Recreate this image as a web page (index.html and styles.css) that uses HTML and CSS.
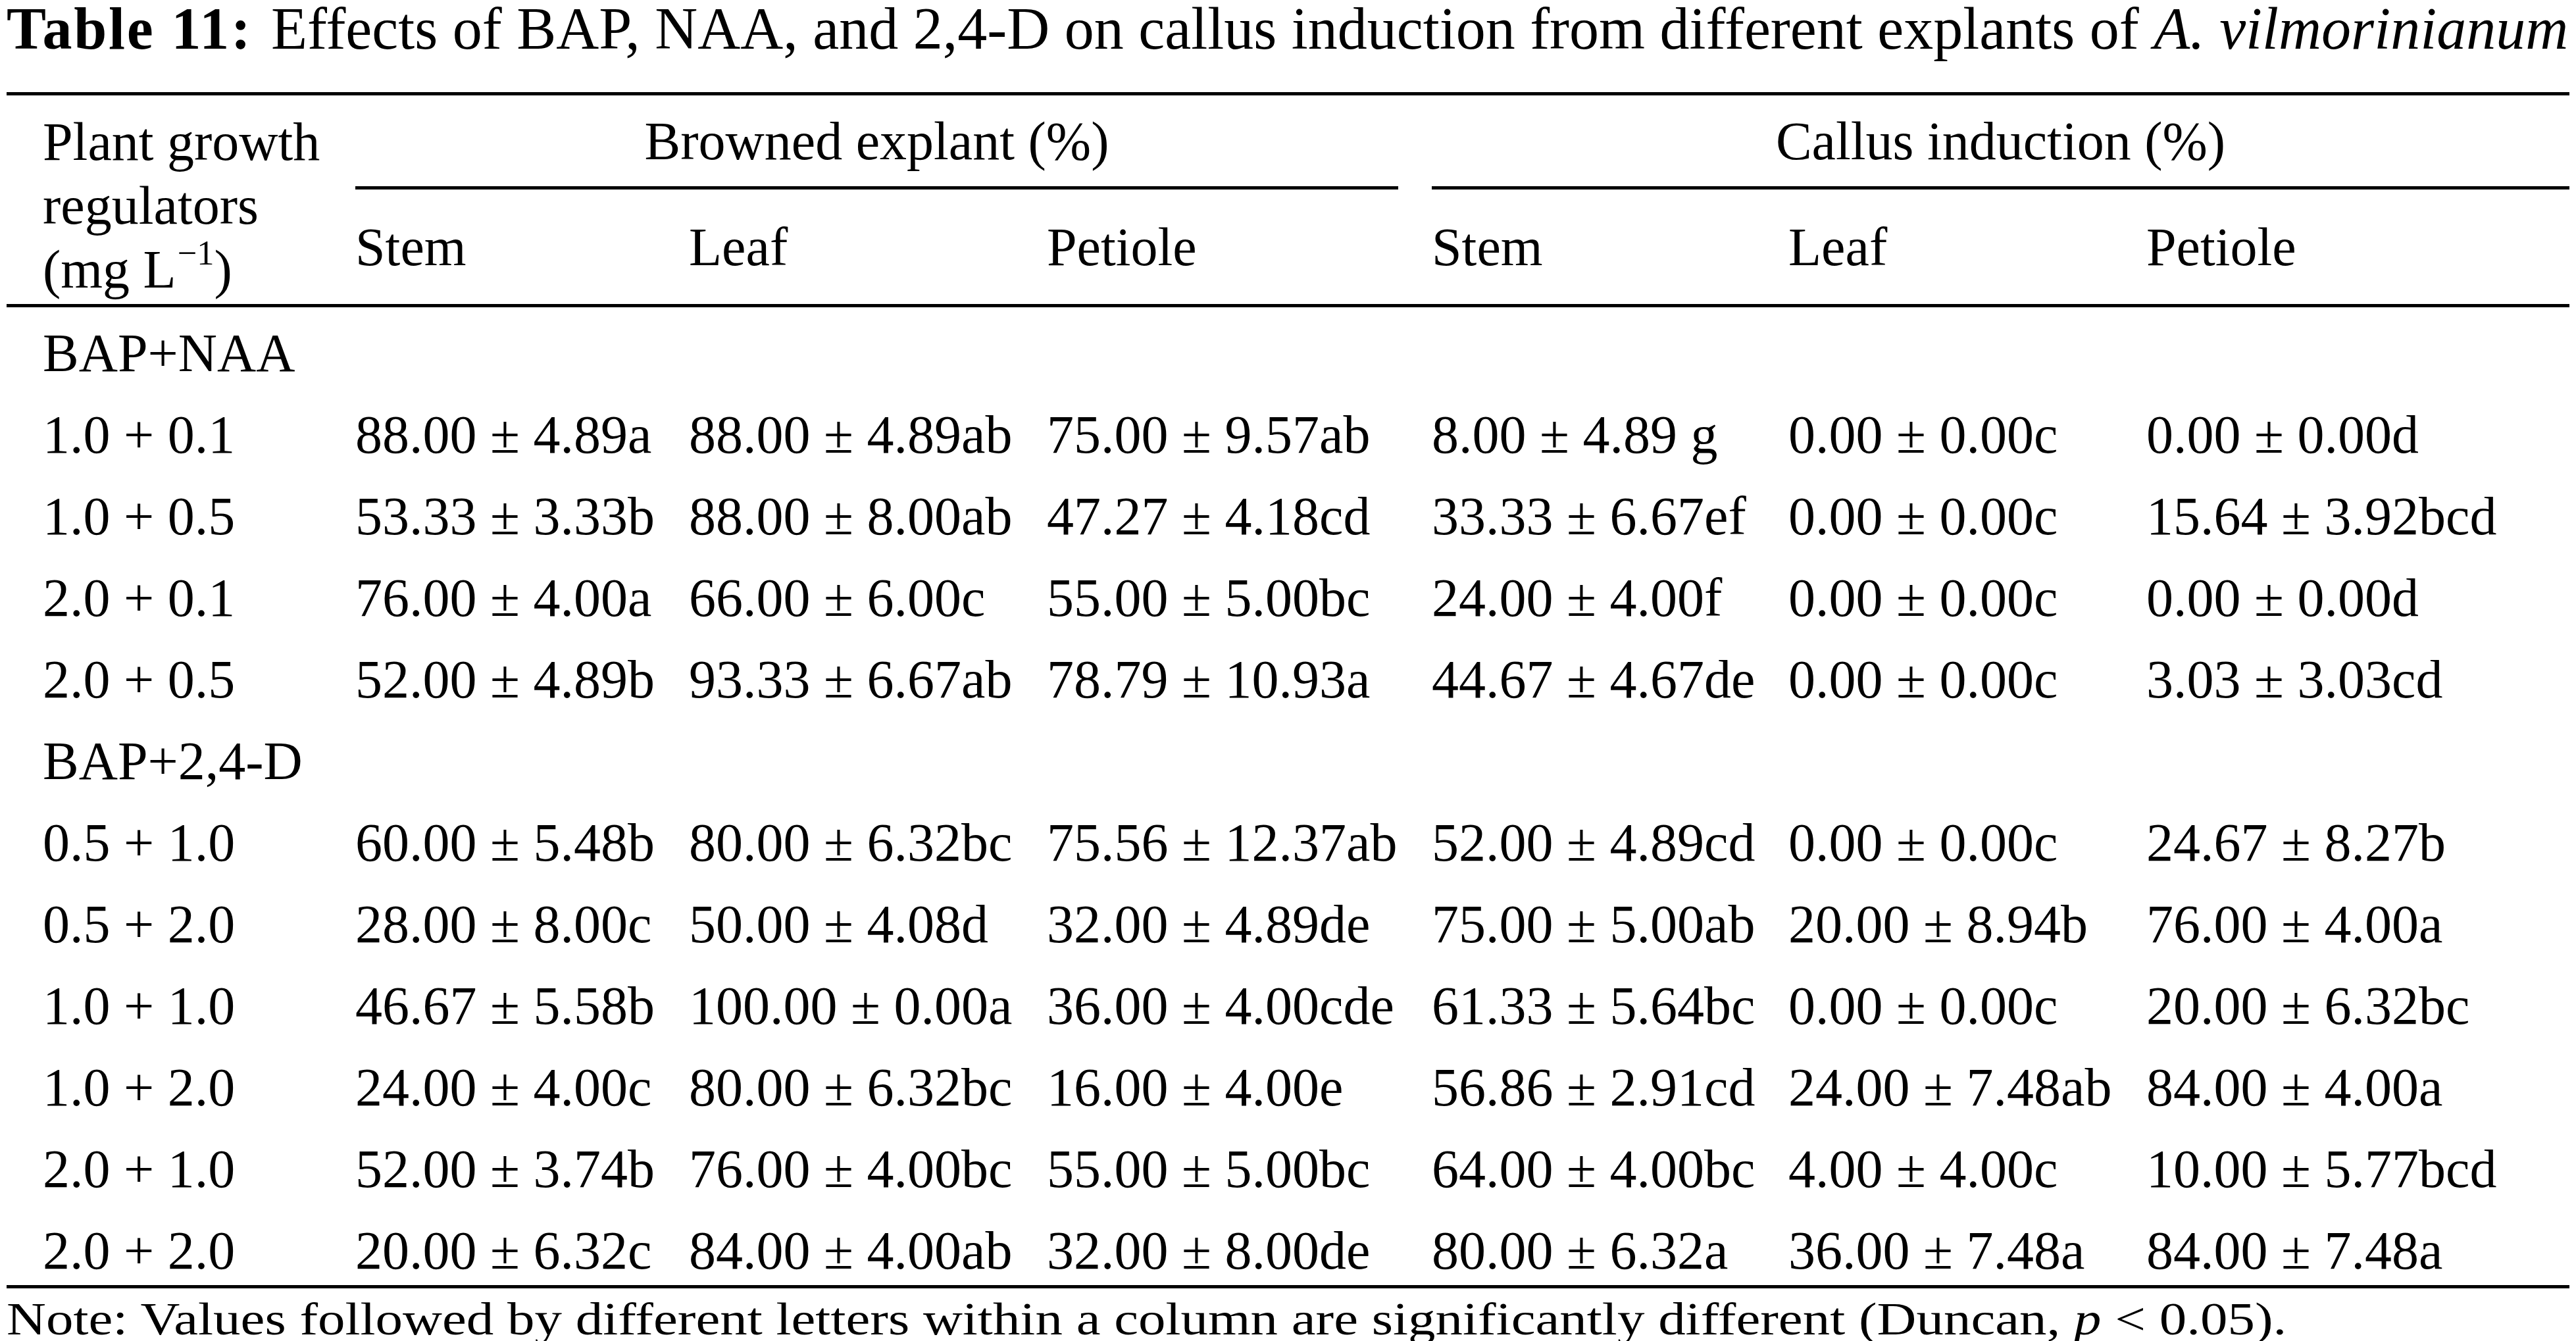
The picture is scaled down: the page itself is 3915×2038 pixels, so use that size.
FILE: index.html
```html
<!DOCTYPE html>
<html lang="en">
<head>
<meta charset="utf-8">
<title>Table 11</title>
<link rel="stylesheet" href="styles.css">
</head>
<body>
<div class="page">
  <h1 class="caption"><b>Table 11:</b> Effects of BAP, NAA, and 2,4-D on callus induction from different explants of <i>A. vilmorinianum</i></h1>
  <div class="table">
    <div class="thead">
      <div class="h-label">Plant growth<br>regulators<br>(mg L<sup>−1</sup>)</div>
      <div class="h-group browned">Browned explant (%)</div>
      <div class="h-group callus">Callus induction (%)</div>
      <div class="h-sub">Stem</div>
      <div class="h-sub">Leaf</div>
      <div class="h-sub">Petiole</div>
      <div class="h-sub">Stem</div>
      <div class="h-sub">Leaf</div>
      <div class="h-sub">Petiole</div>
    </div>
    <div class="tbody">
      <div class="row"><div class="lab">BAP+NAA</div></div>
      <div class="row"><div class="lab num">1.0 + 0.1</div><div>88.00 ± 4.89a</div><div>88.00 ± 4.89ab</div><div>75.00 ± 9.57ab</div><div>8.00 ± 4.89 g</div><div>0.00 ± 0.00c</div><div>0.00 ± 0.00d</div></div>
      <div class="row"><div class="lab num">1.0 + 0.5</div><div>53.33 ± 3.33b</div><div>88.00 ± 8.00ab</div><div>47.27 ± 4.18cd</div><div>33.33 ± 6.67ef</div><div>0.00 ± 0.00c</div><div>15.64 ± 3.92bcd</div></div>
      <div class="row"><div class="lab num">2.0 + 0.1</div><div>76.00 ± 4.00a</div><div>66.00 ± 6.00c</div><div>55.00 ± 5.00bc</div><div>24.00 ± 4.00f</div><div>0.00 ± 0.00c</div><div>0.00 ± 0.00d</div></div>
      <div class="row"><div class="lab num">2.0 + 0.5</div><div>52.00 ± 4.89b</div><div>93.33 ± 6.67ab</div><div>78.79 ± 10.93a</div><div>44.67 ± 4.67de</div><div>0.00 ± 0.00c</div><div>3.03 ± 3.03cd</div></div>
      <div class="row"><div class="lab">BAP+2,4-D</div></div>
      <div class="row"><div class="lab num">0.5 + 1.0</div><div>60.00 ± 5.48b</div><div>80.00 ± 6.32bc</div><div>75.56 ± 12.37ab</div><div>52.00 ± 4.89cd</div><div>0.00 ± 0.00c</div><div>24.67 ± 8.27b</div></div>
      <div class="row"><div class="lab num">0.5 + 2.0</div><div>28.00 ± 8.00c</div><div>50.00 ± 4.08d</div><div>32.00 ± 4.89de</div><div>75.00 ± 5.00ab</div><div>20.00 ± 8.94b</div><div>76.00 ± 4.00a</div></div>
      <div class="row"><div class="lab num">1.0 + 1.0</div><div>46.67 ± 5.58b</div><div>100.00 ± 0.00a</div><div>36.00 ± 4.00cde</div><div>61.33 ± 5.64bc</div><div>0.00 ± 0.00c</div><div>20.00 ± 6.32bc</div></div>
      <div class="row"><div class="lab num">1.0 + 2.0</div><div>24.00 ± 4.00c</div><div>80.00 ± 6.32bc</div><div>16.00 ± 4.00e</div><div>56.86 ± 2.91cd</div><div>24.00 ± 7.48ab</div><div>84.00 ± 4.00a</div></div>
      <div class="row"><div class="lab num">2.0 + 1.0</div><div>52.00 ± 3.74b</div><div>76.00 ± 4.00bc</div><div>55.00 ± 5.00bc</div><div>64.00 ± 4.00bc</div><div>4.00 ± 4.00c</div><div>10.00 ± 5.77bcd</div></div>
      <div class="row"><div class="lab num">2.0 + 2.0</div><div>20.00 ± 6.32c</div><div>84.00 ± 4.00ab</div><div>32.00 ± 8.00de</div><div>80.00 ± 6.32a</div><div>36.00 ± 7.48a</div><div>84.00 ± 7.48a</div></div>
    </div>
  </div>
  <p class="note">Note: Values followed by different letters within a column are significantly different (Duncan, <i>p</i> &lt; 0.05).</p>
</div>
</body>
</html>
```
FILE: styles.css
```css
html, body {
  margin: 0;
  padding: 0;
  background: #ffffff;
  color: #000000;
}

.page {
  padding: 0 10px;
  width: 3895px;
  font-family: "Liberation Serif", "Times New Roman", serif;
  --cols: 530px 507px 544px 585px 542px 544px 643px;
}

.caption {
  margin: 0 0 52px 0;
  font-size: 90px;
  line-height: 88px;
  font-weight: normal;
  white-space: nowrap;
}

.caption b {
  font-weight: bold;
  letter-spacing: 2.7px;
  margin-right: 6px;
}

.table {
  font-size: 82px;
}

.thead {
  display: grid;
  grid-template-columns: var(--cols);
  grid-template-rows: auto auto;
  border-top: 5px solid #000;
  border-bottom: 5px solid #000;
}

.h-label {
  grid-column: 1;
  grid-row: 1 / 3;
  padding: 22px 0 0 55px;
  line-height: 97px;
}

.h-label sup {
  font-size: 64%;
  line-height: 0;
  vertical-align: 35px;
  margin-left: 2px;
}

.h-group {
  grid-row: 1;
  text-align: center;
  line-height: 97px;
  padding: 21px 0 20px 0;
  border-bottom: 5px solid #000;
}

.h-group.browned {
  grid-column: 2 / 5;
  margin-right: 51px;
}

.h-group.callus {
  grid-column: 5 / 8;
}

.h-sub {
  grid-row: 2;
  line-height: 97px;
  padding: 39px 0 38px 0;
}

.tbody {
  padding-top: 18px;
  display: flex;
  flex-direction: column;
  gap: 20px;
  border-bottom: 5px solid #000;
}

.row {
  display: grid;
  grid-template-columns: var(--cols);
  line-height: 104px;
  height: 104px;
  white-space: nowrap;
}

.lab {
  padding-left: 55px;
}

.note {
  margin: 13px 0 0 0;
  width: max-content;
  font-size: 70px;
  line-height: 68px;
  white-space: nowrap;
  transform: scaleX(1.185);
  transform-origin: left top;
}
```
